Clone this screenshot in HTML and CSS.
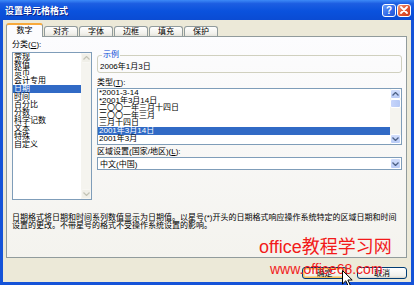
FILE: index.html
```html
<!DOCTYPE html>
<html lang="zh-CN">
<head>
  <meta charset="UTF-8" />
  <title>设置单元格格式</title>
  <link rel="stylesheet" href="styles.css">
</head>
<body>
  <div class="window">
    <div class="titlebar">
      <span class="title">设置单元格格式</span>
      <div class="caption-btns">
        <span class="cap-btn help">?</span>
        <span class="cap-btn close">
          <svg width="8" height="8" viewBox="0 0 8 8"><path d="M1 1 L7 7 M7 1 L1 7" stroke="#fff" stroke-width="1.8" stroke-linecap="round"/></svg>
        </span>
      </div>
    </div>

    <div class="body">
      <div class="tabs">
        <span class="tab active">数字</span>
        <span class="tab">对齐</span>
        <span class="tab">字体</span>
        <span class="tab">边框</span>
        <span class="tab">填充</span>
        <span class="tab">保护</span>
      </div>

      <div class="panel">
        <div class="columns">
          <div class="left">
            <div class="label">分类(<u>C</u>):</div>
            <div class="listbox cat-list">
              <ul class="items">
                <li>常规</li>
                <li>数值</li>
                <li>货币</li>
                <li>会计专用</li>
                <li class="selected">日期</li>
                <li>时间</li>
                <li>百分比</li>
                <li>分数</li>
                <li>科学记数</li>
                <li>文本</li>
                <li>特殊</li>
                <li>自定义</li>
              </ul>
              <div class="scrollbar disabled">
                <span class="sb-btn"><svg width="7" height="4" viewBox="0 0 7 4"><path d="M0.5 3.5 L3.5 0.5 L6.5 3.5" fill="none" stroke="#c3c3b6" stroke-width="1.2"/></svg></span>
                <span class="sb-track"></span>
                <span class="sb-btn"><svg width="7" height="4" viewBox="0 0 7 4"><path d="M0.5 0.5 L3.5 3.5 L6.5 0.5" fill="none" stroke="#c3c3b6" stroke-width="1.2"/></svg></span>
              </div>
            </div>
          </div>

          <div class="right">
            <fieldset class="sample">
              <legend>示例</legend>
              <div class="sample-text">2006年1月3日</div>
            </fieldset>

            <div class="label type-label">类型(<u>T</u>):</div>
            <div class="listbox type-list">
              <ul class="items">
                <li>*2001-3-14</li>
                <li>*2001年3月14日</li>
                <li>二〇〇一年三月十四日</li>
                <li>二〇〇一年三月</li>
                <li>三月十四日</li>
                <li class="selected">2001年3月14日</li>
                <li>2001年3月</li>
              </ul>
              <div class="scrollbar">
                <span class="sb-btn"><svg width="7" height="4" viewBox="0 0 7 4"><path d="M0.5 3.5 L3.5 0.5 L6.5 3.5" fill="none" stroke="#4d6185" stroke-width="1.3"/></svg></span>
                <span class="sb-thumb"></span>
                <span class="sb-track"></span>
                <span class="sb-btn"><svg width="7" height="4" viewBox="0 0 7 4"><path d="M0.5 0.5 L3.5 3.5 L6.5 0.5" fill="none" stroke="#4d6185" stroke-width="1.3"/></svg></span>
              </div>
            </div>

            <div class="label locale-label">区域设置(国家/地区)(<u>L</u>):</div>
            <div class="combo">
              <span class="combo-text">中文(中国)</span>
              <span class="sb-btn combo-btn"><svg width="7" height="4" viewBox="0 0 7 4"><path d="M0.5 0.5 L3.5 3.5 L6.5 0.5" fill="none" stroke="#4d6185" stroke-width="1.3"/></svg></span>
            </div>
          </div>
        </div>

        <p class="desc">日期格式将日期和时间系列数值显示为日期值。以星号(*)开头的日期格式响应操作系统特定的区域日期和时间<br>设置的更改。不带星号的格式不受操作系统设置的影响。</p>
      </div>

      <div class="buttons">
        <button class="btn default">确定</button>
        <button class="btn">取消</button>
      </div>
    </div>

    <div class="watermark big">office教程学习网</div>
    <div class="watermark url">www.office68.com</div>
    <svg class="cursor" width="11" height="17" viewBox="0 0 11 17">
      <path d="M0.5 0.5 L0.5 14 L3.8 10.8 L6.2 16 L8.2 15.1 L5.9 10 L10.2 10 Z" fill="#fff" stroke="#000" stroke-width="1"/>
    </svg>
  </div>
</body>
</html>
```

FILE: styles.css
```css
body {
  margin: 0;
  font-family: "Liberation Sans", "Noto Sans CJK SC", sans-serif;
  font-size: 8px;
  color: #000;
}

.window {
  position: relative;
  width: 414px;
  height: 285px;
  background-color: #1553d8;
  display: flex;
  flex-direction: column;
  overflow: hidden;
}

/* title bar */
.titlebar {
  height: 20px;
  display: flex;
  align-items: center;
  justify-content: space-between;
  padding: 0 3px 0 5px;
  background: linear-gradient(#3d8af7 0%, #1d5ee2 18%, #0a52dd 55%, #0a4bd3 100%);
  flex-shrink: 0;
}

.title {
  color: #fff;
  font-family: "Noto Sans CJK SC", sans-serif;
  font-weight: bold;
  font-size: 9px;
  text-shadow: 1px 1px 0 #0a1f8a;
}

.caption-btns {
  display: flex;
  gap: 1px;
}

.cap-btn {
  width: 14px;
  height: 13px;
  box-sizing: border-box;
  border: 1px solid #fff;
  border-radius: 3px;
  display: flex;
  align-items: center;
  justify-content: center;
  color: #fff;
  font-weight: bold;
  font-size: 10px;
}

.help {
  background: linear-gradient(135deg, #6a9cf8, #2f67e8 60%, #2458d4);
}

.close {
  background: linear-gradient(135deg, #f19a7c, #e0532f 55%, #c8391a);
}

/* dialog body */
.body {
  flex: 1;
  margin: 0 3px 3px;
  background-color: #ece9d8;
  padding: 3px 4px 0 3px;
}

.tabs {
  display: flex;
  align-items: flex-end;
  gap: 1px;
}

.tab {
  width: 34px;
  height: 10px;
  box-sizing: border-box;
  border: 1px solid #919b9c;
  border-bottom: none;
  border-radius: 3px 3px 0 0;
  background: linear-gradient(#fefefe, #f2f1ec 70%, #e6e4dc);
  display: flex;
  align-items: center;
  justify-content: center;
  line-height: 8px;
}

.tab.active {
  width: 37px;
  height: 14px;
  margin-bottom: -1px;
  background: #fcfcfe;
  border-top: 2px solid #f7a93b;
  position: relative;
  z-index: 1;
}

.panel {
  height: 222px;
  box-sizing: border-box;
  border: 1px solid #919b9c;
  background: linear-gradient(#fcfcfe, #f4f3ee);
  padding: 4px 4px 0 5px;
}

.columns {
  display: grid;
  grid-template-columns: 80px 1fr;
  column-gap: 5px;
}

.label {
  line-height: 8px;
  height: 8px;
  margin-bottom: 3px;
  white-space: nowrap;
}

.type-label {
  margin-top: 6px;
  margin-bottom: 1px;
}

.locale-label {
  margin-top: 3px;
  margin-bottom: 1px;
}

/* list boxes */
.listbox {
  border: 1px solid #7f9db9;
  background: #fff;
  display: flex;
  box-sizing: border-box;
}

.cat-list {
  height: 148px;
}

.type-list {
  height: 57px;
}

.items {
  list-style: none;
  margin: 0;
  padding: 0;
  flex: 1;
  overflow: hidden;
}

.items li {
  line-height: 8px;
  height: 8px;
  padding-left: 1px;
  white-space: nowrap;
}

.type-list .items li {
  line-height: 7.6px;
  height: 7.6px;
}

.items li.selected {
  background-color: #316ac5;
  color: #fff;
}

/* scrollbars */
.scrollbar {
  width: 10px;
  display: flex;
  flex-direction: column;
  background: #f5f4ef;
  flex-shrink: 0;
}

.type-list .scrollbar {
  width: 11px;
}

.sb-btn {
  height: 10px;
  box-sizing: border-box;
  border: 1px solid #fff;
  border-radius: 2px;
  background: linear-gradient(#d2defc, #b9cbf6);
  display: flex;
  align-items: center;
  justify-content: center;
  flex-shrink: 0;
}

.disabled .sb-btn {
  background: #f0efe8;
  border-color: #f8f7f3;
}

.sb-thumb {
  height: 9px;
  box-sizing: border-box;
  border: 1px solid #fff;
  border-radius: 2px;
  background: linear-gradient(90deg, #c7d5fb, #b6c9f5);
}

.sb-track {
  flex: 1;
}

/* sample group */
.sample {
  margin: 10px 0 0;
  padding: 4px 2px 1px;
  border: 1px solid #d0d0bf;
  border-radius: 3px;
}

.sample legend {
  color: #0046d5;
  line-height: 8px;
  padding: 0 1px;
  margin-left: 2px;
}

.sample-text {
  line-height: 8px;
  height: 8px;
}

/* combo */
.combo {
  height: 13px;
  box-sizing: border-box;
  border: 1px solid #7f9db9;
  background: #fff;
  display: flex;
  align-items: center;
  justify-content: space-between;
  padding: 0 0 0 2px;
}

.combo-btn {
  width: 11px;
  height: 11px;
}

.desc {
  margin: 14px 0 0;
  line-height: 8px;
  white-space: nowrap;
}

/* bottom buttons */
.buttons {
  display: flex;
  justify-content: flex-end;
  gap: 10px;
  margin-top: 9px;
}

.btn {
  width: 50px;
  height: 12px;
  padding: 0;
  border: 1px solid #003c74;
  border-radius: 3px;
  background: linear-gradient(#ffffff, #f0efea 80%, #d8d3c8);
  font-family: "Noto Sans CJK SC", sans-serif;
  font-size: 8px;
  line-height: 8px;
  color: #000;
}

.btn.default {
  width: 45px;
  box-shadow: inset 0 0 0 1.5px #f9c15a;
}

/* overlays */
.watermark {
  position: absolute;
  color: #f21a1a;
  white-space: nowrap;
  font-family: "Liberation Sans", "Noto Sans CJK SC", sans-serif;
}

.watermark.big {
  left: 259px;
  top: 238px;
  font-size: 18px;
  line-height: 18px;
}

.watermark.url {
  left: 270px;
  top: 262px;
  font-size: 14px;
  line-height: 14px;
}

.cursor {
  position: absolute;
  left: 342px;
  top: 270px;
}
```
